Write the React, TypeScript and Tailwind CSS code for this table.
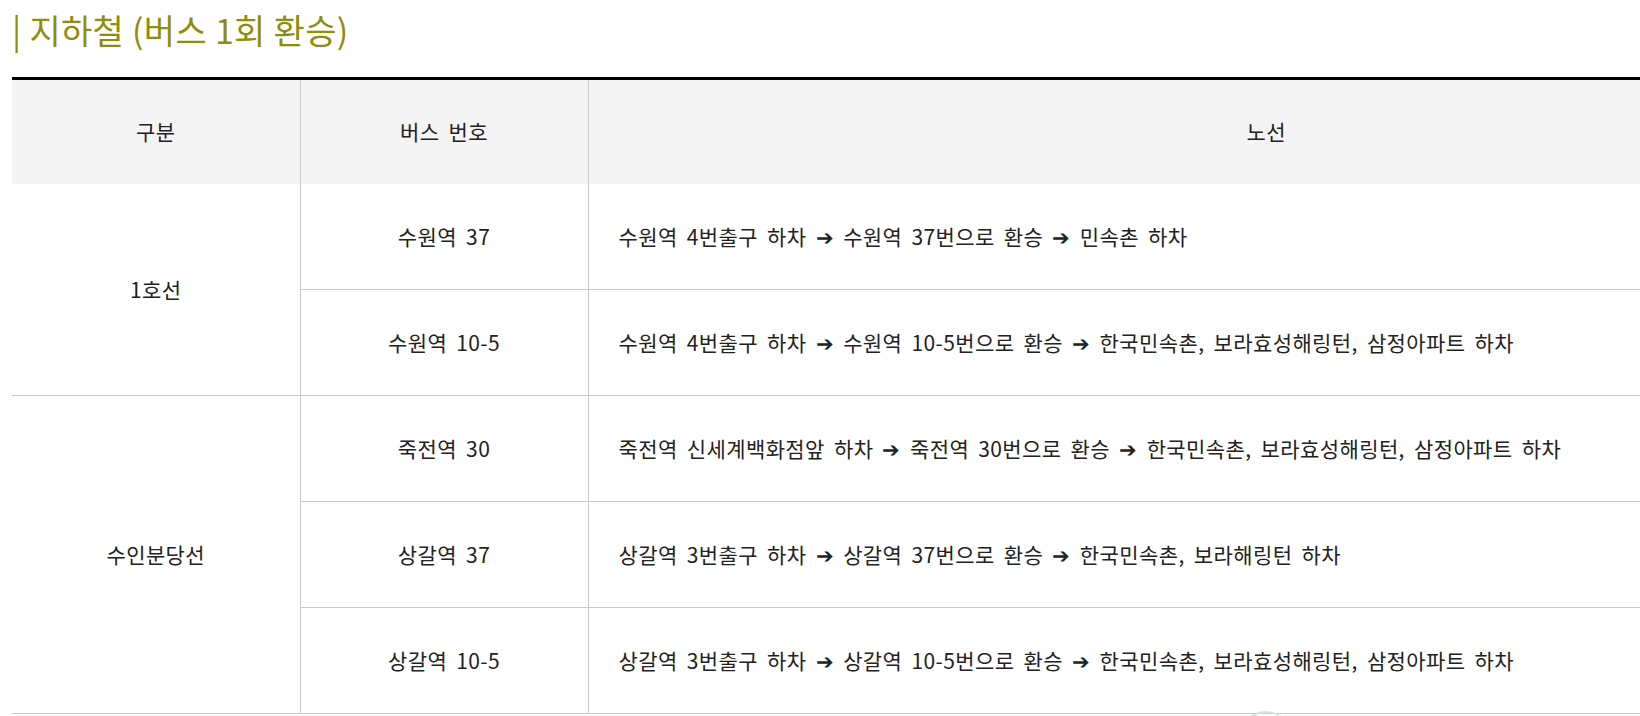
import React from "react";

type Route = { bus: string; path: string };
type Group = { line: string; routes: Route[] };

const GROUPS: Group[] = [
  {
    line: "1호선",
    routes: [
      { bus: "수원역 37", path: "수원역 4번출구 하차 ➔ 수원역 37번으로 환승 ➔ 민속촌 하차" },
      { bus: "수원역 10-5", path: "수원역 4번출구 하차 ➔ 수원역 10-5번으로 환승 ➔ 한국민속촌, 보라효성해링턴, 삼정아파트 하차" },
    ],
  },
  {
    line: "수인분당선",
    routes: [
      { bus: "죽전역 30", path: "죽전역 신세계백화점앞 하차 ➔ 죽전역 30번으로 환승 ➔ 한국민속촌, 보라효성해링턴, 삼정아파트 하차" },
      { bus: "상갈역 37", path: "상갈역 3번출구 하차 ➔ 상갈역 37번으로 환승 ➔ 한국민속촌, 보라해링턴 하차" },
      { bus: "상갈역 10-5", path: "상갈역 3번출구 하차 ➔ 상갈역 10-5번으로 환승 ➔ 한국민속촌, 보라효성해링턴, 삼정아파트 하차" },
    ],
  },
];

export default function App() {
  return (
    <div
      className="relative w-[1640px] h-[716px] overflow-hidden bg-white text-[#222]"
      style={{ fontFamily: '"Noto Sans CJK KR", "Noto Sans", sans-serif' }}
    >
      <h2 className="pl-3 pt-[9px] text-[34px] leading-[42px] tracking-[0.3px] text-[#8e8e0c]">| 지하철 (버스 1회 환승)</h2>

      <div className="mt-[26px] ml-3">
        <table className="w-[1932px] table-fixed border-collapse border-t-[3px] border-black text-[21px] tracking-[0.4px] [word-spacing:4px]">
          <colgroup>
            <col className="w-[288px]" />
            <col className="w-[288px]" />
            <col />
          </colgroup>
          <thead>
            <tr className="h-[105px] bg-[#f4f4f4]">
              <th className="font-normal border-r border-[#c9c9c9]">구분</th>
              <th className="font-normal border-r border-[#c9c9c9]">버스 번호</th>
              <th className="font-normal">노선</th>
            </tr>
          </thead>
          <tbody>
            {GROUPS.map(g =>
              g.routes.map((r, i) => (
                <tr key={g.line + r.bus} className="h-[106px]">
                  {i === 0 && (
                    <td rowSpan={g.routes.length} className="text-center border-r border-b border-[#c9c9c9]">
                      {g.line}
                    </td>
                  )}
                  <td className="text-center border-r border-b border-[#c9c9c9]">{r.bus}</td>
                  <td className="pl-[30px] border-b border-[#c9c9c9]">{r.path}</td>
                </tr>
              ))
            )}
          </tbody>
        </table>
      </div>

      {/* floating button peeking in at the bottom */}
      <div className="absolute left-[1240px] top-[711px] w-[52px] h-[52px] rounded-full border-2 border-[#cfe9dc]" />
    </div>
  );
}
